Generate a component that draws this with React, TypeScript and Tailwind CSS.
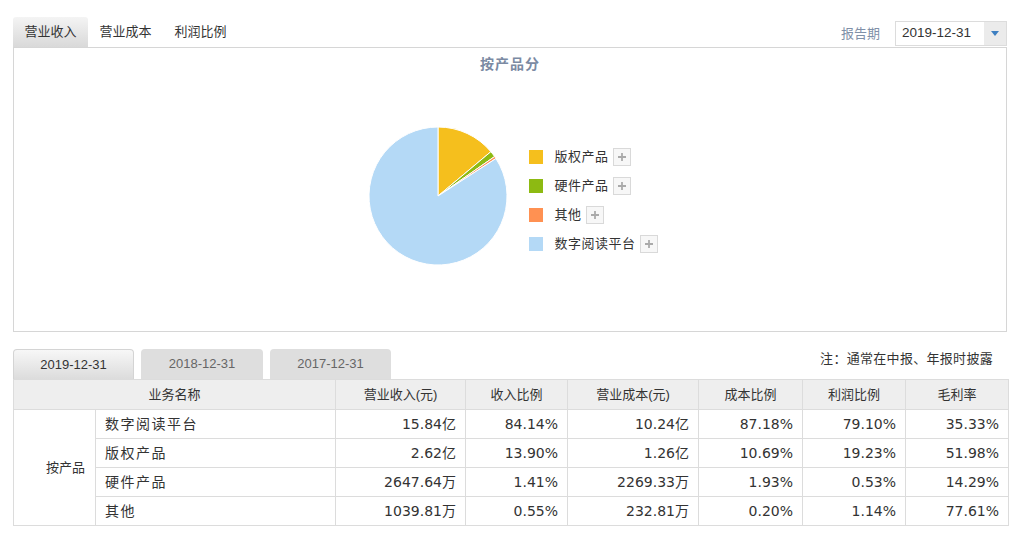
const slices = [
  { name: '版权产品', value: 13.9, color: '#f5bf1d' },
  { name: '硬件产品', value: 1.41, color: '#8dba12' },
  { name: '其他', value: 0.55, color: '#ff9152' },
  { name: '数字阅读平台', value: 84.14, color: '#b4d9f6' },
];

const rows = [
  ['数字阅读平台', '15.84亿', '84.14%', '10.24亿', '87.18%', '79.10%', '35.33%'],
  ['版权产品', '2.62亿', '13.90%', '1.26亿', '10.69%', '19.23%', '51.98%'],
  ['硬件产品', '2647.64万', '1.41%', '2269.33万', '1.93%', '0.53%', '14.29%'],
  ['其他', '1039.81万', '0.55%', '232.81万', '0.20%', '1.14%', '77.61%'],
];

const font = { fontFamily: '"Liberation Sans", "Noto Sans CJK SC", sans-serif' };
const numFont = { fontFamily: '"DejaVu Sans", "Noto Sans CJK SC", sans-serif' };

function Pie() {
  const cx = 70;
  const cy = 70;
  const r = 69;
  let acc = 0;
  return (
    <svg width="140" height="140" viewBox="0 0 140 140">
      {slices.map((s) => {
        const a0 = (acc / 100) * Math.PI * 2;
        acc += s.value;
        const a1 = (acc / 100) * Math.PI * 2;
        const x0 = cx + r * Math.sin(a0);
        const y0 = cy - r * Math.cos(a0);
        const x1 = cx + r * Math.sin(a1);
        const y1 = cy - r * Math.cos(a1);
        const large = a1 - a0 > Math.PI ? 1 : 0;
        return (
          <path
            key={s.name}
            d={`M${cx} ${cy} L${x0} ${y0} A${r} ${r} 0 ${large} 1 ${x1} ${y1} Z`}
            fill={s.color}
            stroke="#fff"
            strokeWidth="1"
            strokeLinejoin="round"
          />
        );
      })}
    </svg>
  );
}

export default function App() {
  return (
    <div className="w-[1024px] h-[544px] bg-white text-[#333] overflow-hidden" style={font}>
      <div className="px-[13px] pt-[17px] w-[1020px]">
        {/* top tabs + report period */}
        <div className="flex items-end h-[31px] border-b border-[#d6d6d6]">
          <div className="w-[75px] h-[30px] flex items-center justify-center text-[13px] text-[#333] bg-gradient-to-b from-[#f4f4f4] to-[#d9d9d9] rounded-t-[3px]">营业收入</div>
          <div className="w-[75px] h-[30px] flex items-center justify-center text-[13px] text-[#333]">营业成本</div>
          <div className="w-[75px] h-[30px] flex items-center justify-center text-[13px] text-[#333]">利润比例</div>
          <div className="flex-1" />
          <div className="self-start flex items-center mt-[4px]">
            <span className="text-[13px] text-[#8090a8] mr-[15px]">报告期</span>
            <div className="w-[112px] h-[25px] border border-[#dcdcdc] flex items-center">
              <span className="flex-1 pl-[6px] text-[13.5px] text-[#333]">2019-12-31</span>
              <div className="w-[22px] h-full bg-[#ebebeb] flex items-center justify-center">
                <svg width="8" height="5" viewBox="0 0 8 5"><path d="M0 0 L8 0 L4 5 Z" fill="#3d7fc1" /></svg>
              </div>
            </div>
          </div>
        </div>

        {/* chart box */}
        <div className="h-[284px] border border-t-0 border-[#d6d6d6] flex flex-col items-center">
          <div className="mt-[6px] text-[14px] font-bold text-[#7b8aa3] tracking-[1px]">按产品分</div>
          <div className="flex items-center mt-[51px] ml-[6px]">
            <Pie />
            <div className="ml-[21px] flex flex-col gap-[11px] mt-[8px]">
              {slices.map((s) => (
                <div key={s.name} className="flex items-center h-[18px]">
                  <span className="w-[14px] h-[14px]" style={{ background: s.color }} />
                  <span className="ml-[11px] text-[13px] text-[#333] tracking-[0.5px]">{s.name}</span>
                  <span className="ml-[4px] w-[18px] h-[18px] border border-[#d9d9d9] bg-[#f7f7f7] flex items-center justify-center">
                    <svg width="10" height="10" viewBox="0 0 10 10"><path d="M5 1 V9 M1 5 H9" stroke="#aaa" strokeWidth="1.8" /></svg>
                  </span>
                </div>
              ))}
            </div>
          </div>
        </div>

        {/* period tabs + note */}
        <div className="flex items-end mt-[17px] h-[30px]">
          <div className="w-[121px] h-[30px] flex items-center justify-center text-[13px] text-[#333] bg-gradient-to-b from-[#f7f7f7] to-[#dcdcdc] rounded-t-[4px] border border-b-0 border-[#d4d4d4]">2019-12-31</div>
          <div className="ml-[7px] w-[122px] h-[30px] flex items-center justify-center text-[13px] text-[#666] bg-[#dedede] rounded-t-[4px]">2018-12-31</div>
          <div className="ml-[7px] w-[121px] h-[30px] flex items-center justify-center text-[13px] text-[#666] bg-[#dedede] rounded-t-[4px]">2017-12-31</div>
          <div className="flex-1" />
          <div className="self-start text-[13px] text-[#333] mr-[14px] tracking-[0.3px]">注：通常在中报、年报时披露</div>
        </div>

        {/* table */}
        <table className="w-[995px] border-collapse text-[14px] table-fixed">
          <colgroup>
            <col className="w-[82px]" />
            <col className="w-[240px]" />
            <col className="w-[130px]" />
            <col className="w-[102px]" />
            <col className="w-[131px]" />
            <col className="w-[104px]" />
            <col className="w-[103px]" />
            <col className="w-[103px]" />
          </colgroup>
          <thead>
            <tr className="h-[30px] bg-[#eeeeee] text-[13px] text-[#333]">
              <th colSpan={2} className="font-normal border border-[#dcdcdc]">业务名称</th>
              <th className="font-normal border border-[#dcdcdc]">营业收入(元)</th>
              <th className="font-normal border border-[#dcdcdc]">收入比例</th>
              <th className="font-normal border border-[#dcdcdc]">营业成本(元)</th>
              <th className="font-normal border border-[#dcdcdc]">成本比例</th>
              <th className="font-normal border border-[#dcdcdc]">利润比例</th>
              <th className="font-normal border border-[#dcdcdc]">毛利率</th>
            </tr>
          </thead>
          <tbody>
            {rows.map((r, i) => (
              <tr key={r[0]} className="h-[29px]">
                {i === 0 && (
                  <td rowSpan={4} className="border border-[#dcdcdc] text-center text-[13px] pl-[22px]">按产品</td>
                )}
                <td className="border border-[#dcdcdc] pl-[9px] tracking-[1.5px]">{r[0]}</td>
                {r.slice(1).map((v, j) => (
                  <td key={j} className="border border-[#dcdcdc] text-right pr-[9px]" style={numFont}>{v}</td>
                ))}
              </tr>
            ))}
          </tbody>
        </table>
      </div>
    </div>
  );
}
